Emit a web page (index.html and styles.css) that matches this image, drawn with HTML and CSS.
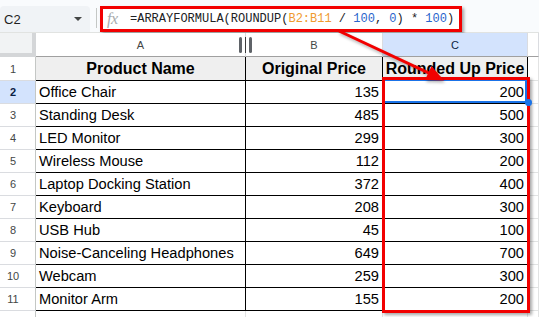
FILE: index.html
```html
<!DOCTYPE html>
<html>
<head>
<meta charset="utf-8">
<link rel="stylesheet" href="styles.css">
</head>
<body>
<div class="app">
  <div class="topbar">
    <div class="namebox">
      <span class="cellref">C2</span>
      <svg class="caret" width="8" height="4" viewBox="0 0 8 4"><polygon points="0,0 8,0 4,4" fill="#444746"/></svg>
    </div>
    <div class="sep"></div>
    <div class="formula">
      <span class="fx">fx</span>
      <span class="ftext">=ARRAYFORMULA(ROUNDUP(<span class="ref">B2:B11</span> / <span class="num">100</span>, <span class="num">0</span>) * <span class="num">100</span>)</span>
    </div>
  </div>

  <div class="grid">
    <div class="corner"></div>
    <div class="ch">A</div>
    <div class="ch">B</div>
    <div class="ch sel">C</div>
    <div class="ch"></div>

    <div class="rh first">1</div>
    <div class="c hd">Product Name</div>
    <div class="c hd">Original Price</div>
    <div class="c hd">Rounded Up Price</div>
    <div class="c e first"></div>

    <div class="rh sel">2</div>
    <div class="c">Office Chair</div>
    <div class="c num">135</div>
    <div class="c num">200</div>
    <div class="c e"></div>

    <div class="rh">3</div>
    <div class="c">Standing Desk</div>
    <div class="c num">485</div>
    <div class="c num">500</div>
    <div class="c e"></div>

    <div class="rh">4</div>
    <div class="c">LED Monitor</div>
    <div class="c num">299</div>
    <div class="c num">300</div>
    <div class="c e"></div>

    <div class="rh">5</div>
    <div class="c">Wireless Mouse</div>
    <div class="c num">112</div>
    <div class="c num">200</div>
    <div class="c e"></div>

    <div class="rh">6</div>
    <div class="c">Laptop Docking Station</div>
    <div class="c num">372</div>
    <div class="c num">400</div>
    <div class="c e"></div>

    <div class="rh">7</div>
    <div class="c">Keyboard</div>
    <div class="c num">208</div>
    <div class="c num">300</div>
    <div class="c e"></div>

    <div class="rh">8</div>
    <div class="c">USB Hub</div>
    <div class="c num">45</div>
    <div class="c num">100</div>
    <div class="c e"></div>

    <div class="rh">9</div>
    <div class="c">Noise-Canceling Headphones</div>
    <div class="c num">649</div>
    <div class="c num">700</div>
    <div class="c e"></div>

    <div class="rh">10</div>
    <div class="c">Webcam</div>
    <div class="c num">259</div>
    <div class="c num">300</div>
    <div class="c e"></div>

    <div class="rh">11</div>
    <div class="c">Monitor Arm</div>
    <div class="c num">155</div>
    <div class="c num">200</div>
    <div class="c e"></div>

    <div class="rh">12</div>
    <div class="c blank"></div>
    <div class="c blank"></div>
    <div class="c blank"></div>
    <div class="c e"></div>
  </div>

  <div class="resize"><span class="bar"></span><span class="mid"></span><span class="bar"></span></div>
  <div class="selection"></div>
  <div class="redbox"></div>
  <div class="handle"></div>
  <svg class="arrow" width="539" height="317" viewBox="0 0 539 317">
    <line x1="339" y1="31" x2="430" y2="73.6" stroke="#f20000" stroke-width="3"/>
    <polygon points="444,80.5 425,80 431.5,66" fill="#f20000"/>
  </svg>
</div>
</body>
</html>
```

FILE: styles.css
```css
* { box-sizing: border-box; }

body {
  margin: 0;
  background: #ffffff;
  font-family: "Liberation Sans", Arial, sans-serif;
}

.app {
  position: relative;
  width: 539px;
  height: 317px;
  overflow: hidden;
  background: #ffffff;
}

/* ---------- top bar ---------- */
.topbar {
  height: 33px;
  display: flex;
  align-items: flex-start;
  padding-top: 6px;
  background: #f9fbfd;
  border-bottom: 1px solid #e1e3e1;
}

.namebox {
  width: 90px;
  height: 26px;
  display: flex;
  align-items: center;
  justify-content: space-between;
  padding: 0 8px 0 4px;
  background: #f0f3f6;
  border-radius: 4px 4px 0 0;
  color: #1f1f1f;
  font-size: 13px;
}

.sep {
  width: 1px;
  height: 20px;
  margin: 2px 3px 0 6px;
  background: #c4c7c5;
}

.formula {
  width: 362px;
  height: 26px;
  display: flex;
  align-items: center;
  padding-left: 4px;
  border: 3px solid #f20000;
  background: #ffffff;
  box-shadow: 2px 2px 3px rgba(0, 0, 0, 0.35);
}

.fx {
  width: 14px;
  font-family: "Liberation Serif", serif;
  font-style: italic;
  font-size: 16px;
  color: #a8abad;
  letter-spacing: -0.5px;
}

.ftext {
  margin-left: 9px;
  font-family: "Liberation Mono", monospace;
  font-size: 12px;
  color: #202124;
  white-space: pre;
}

.ref { color: #f09a2e; }
.num { color: #2a64cc; }

/* ---------- grid ---------- */
.grid {
  display: grid;
  grid-template-columns: 36px 210px 137px 145px 11px;
  grid-template-rows: 24px 24px repeat(10, 23px) 23px;
}

.corner {
  background: #f1f3f4;
  border-right: 4px solid #d4d6d8;
  border-bottom: 4px solid #d4d6d8;
}

.ch {
  display: flex;
  align-items: center;
  justify-content: center;
  background: #ffffff;
  border-right: 1px solid #dadce0;
  border-bottom: 1px solid #a0a0a0;
  font-size: 11px;
  color: #444746;
}

.ch.sel {
  background: #d3e3fd;
  color: #0b1f44;
}

.rh {
  display: flex;
  align-items: center;
  justify-content: center;
  padding-right: 9px;
  background: #ffffff;
  border-right: 1px solid #c4c7c5;
  border-bottom: 1px solid #dadce0;
  font-size: 11px;
  color: #444746;
}

.rh.sel {
  background: #d3e3fd;
  color: #0b1f44;
  font-weight: bold;
}

.c {
  display: flex;
  align-items: flex-end;
  padding: 0 3px 2px 3px;
  border-right: 1px solid #000000;
  border-bottom: 1px solid #000000;
  font-size: 14.67px;
  line-height: 17px;
  color: #000000;
  white-space: nowrap;
  overflow: hidden;
}

.c.num { justify-content: flex-end; }

.c.hd {
  justify-content: center;
  background: #efefef;
  font-weight: bold;
  font-size: 16px;
  line-height: 18px;
  padding-bottom: 2px;
}

.c.e {
  border-right: 1px solid #e2e3e3;
  border-bottom: 1px solid #e2e3e3;
}

.c.blank {
  border-right: 1px solid #e2e3e3;
  border-bottom: 1px solid #e2e3e3;
}

/* ---------- overlays ---------- */
.resize {
  position: absolute;
  left: 239px;
  top: 37px;
  height: 16px;
  display: flex;
  gap: 2px;
}

.resize .bar {
  width: 3px;
  height: 16px;
  border-radius: 1.5px;
  background: #5f6368;
}

.resize .mid {
  width: 1px;
  height: 16px;
  margin: 0 1px;
  background: #3c3c3c;
}

.selection {
  position: absolute;
  left: 383px;
  top: 79px;
  width: 144px;
  height: 24px;
  border: 2px solid #1a73e8;
}

.redbox {
  position: absolute;
  left: 382px;
  top: 77px;
  width: 148px;
  height: 236px;
  border: 3px solid #f20000;
  box-shadow: 2px 2px 3px rgba(0, 0, 0, 0.35);
}

.handle {
  position: absolute;
  left: 525px;
  top: 99px;
  width: 7px;
  height: 7px;
  border-radius: 50%;
  background: #1a73e8;
}

.arrow {
  position: absolute;
  left: 0;
  top: 0;
  pointer-events: none;
  filter: drop-shadow(1px 2px 1.5px rgba(0, 0, 0, 0.3));
}
```
